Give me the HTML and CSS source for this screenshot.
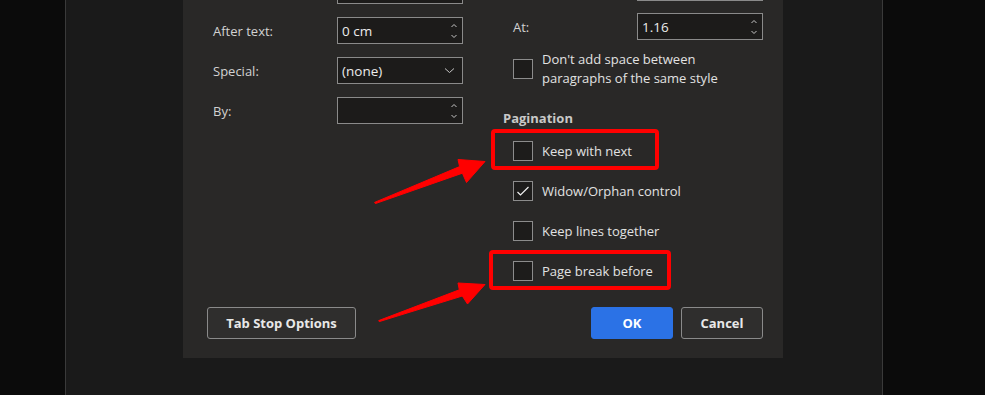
FILE: index.html
```html
<!DOCTYPE html>
<html lang="en">
<head>
    <meta charset="UTF-8">
    <meta name="viewport" content="width=device-width, initial-scale=1.0">
    <title>Paragraph - Line and Page Breaks</title>
    <link rel="stylesheet" href="styles.css">
</head>
<body>

    <div class="screen">
        <div class="side side-left"></div>

        <div class="panel">
            <div class="dialog">
                <div class="dialog-body">

                    <div class="col col-left">
                        <div class="field">
                            <span class="label"></span>
                            <div class="input spin">
                                <span class="value"></span>
                                <svg class="spin-arrows" width="8" height="18" viewBox="0 0 8 18"><path d="M1.5 5 L4 2.5 L6.5 5 M1.5 13 L4 15.5 L6.5 13"/></svg>
                            </div>
                        </div>
                        <div class="field">
                            <span class="label">After text:</span>
                            <div class="input spin">
                                <span class="value">0 cm</span>
                                <svg class="spin-arrows" width="8" height="18" viewBox="0 0 8 18"><path d="M1.5 5 L4 2.5 L6.5 5 M1.5 13 L4 15.5 L6.5 13"/></svg>
                            </div>
                        </div>
                        <div class="field">
                            <span class="label">Special:</span>
                            <div class="input select">
                                <span class="value">(none)</span>
                                <svg class="select-arrow" width="11" height="7" viewBox="0 0 11 7"><path d="M1 1.5 L5.5 5.5 L10 1.5"/></svg>
                            </div>
                        </div>
                        <div class="field">
                            <span class="label">By:</span>
                            <div class="input spin">
                                <span class="value"></span>
                                <svg class="spin-arrows" width="8" height="18" viewBox="0 0 8 18"><path d="M1.5 5 L4 2.5 L6.5 5 M1.5 13 L4 15.5 L6.5 13"/></svg>
                            </div>
                        </div>
                    </div>

                    <div class="col col-right">
                        <div class="field">
                            <span class="label"></span>
                            <div class="input spin">
                                <span class="value"></span>
                            </div>
                        </div>
                        <div class="field">
                            <span class="label">At:</span>
                            <div class="input spin">
                                <span class="value">1.16</span>
                                <svg class="spin-arrows" width="8" height="18" viewBox="0 0 8 18"><path d="M1.5 5 L4 2.5 L6.5 5 M1.5 13 L4 15.5 L6.5 13"/></svg>
                            </div>
                        </div>
                        <div class="check-row check-multi">
                            <span class="checkbox"></span>
                            <span class="check-text">Don't add space between<br>paragraphs of the same style</span>
                        </div>

                        <div class="section-title">Pagination</div>

                        <div class="check-row">
                            <span class="checkbox"></span>
                            <span class="check-text">Keep with next</span>
                        </div>
                        <div class="check-row">
                            <span class="checkbox checked">
                                <svg width="18" height="18" viewBox="0 0 18 18"><path d="M3.5 10 L6.5 13 L14.5 5"/></svg>
                            </span>
                            <span class="check-text">Widow/Orphan control</span>
                        </div>
                        <div class="check-row">
                            <span class="checkbox"></span>
                            <span class="check-text">Keep lines together</span>
                        </div>
                        <div class="check-row">
                            <span class="checkbox"></span>
                            <span class="check-text">Page break before</span>
                        </div>
                    </div>

                </div>

                <div class="dialog-footer">
                    <button class="btn btn-wide">Tab Stop Options</button>
                    <div class="footer-actions">
                        <button class="btn btn-primary">OK</button>
                        <button class="btn">Cancel</button>
                    </div>
                </div>
            </div>
        </div>

        <div class="side side-right"></div>

        <!-- red annotations drawn on top of the screenshot -->
        <svg class="notes" width="985" height="395" viewBox="0 0 985 395">
            <rect x="493" y="131" width="164" height="37" rx="2"/>
            <rect x="491" y="252" width="178" height="36" rx="2"/>
            <polygon points="374.6,202.4 459.6,166.6 458,159.5 485,161.5 466.5,182.5 462.4,173.2 375.4,203.6"/>
            <polygon points="378.7,320.6 459.3,289.8 458,283 485,284.5 467.5,304 462.3,296 379.3,321.6"/>
        </svg>
    </div>

</body>
</html>
```

FILE: styles.css
```css
body {
    margin: 0;
    padding: 0;
    background: #0c0c0c;
    font-family: 'Open Sans', 'Noto Sans', sans-serif;
    font-size: 13px;
    color: #d6d6d6;
    overflow: hidden;
}

.screen {
    position: relative;
    display: flex;
    width: 985px;
    height: 395px;
    overflow: hidden;
}

.side-left {
    width: 65px;
    background: #0b0b0b;
}

.side-right {
    flex: 1;
    background: #0b0b0b;
}

.panel {
    width: 816px;
    height: 395px;
    background: #1a1a1a;
    border-left: 1px solid #3a3a3a;
    border-right: 1px solid #3a3a3a;
}

.dialog {
    width: 600px;
    height: 388px;
    margin-top: -30px;
    margin-left: 117px;
    background: #292827;
    display: flex;
    flex-direction: column;
    box-sizing: border-box;
}

.dialog-body {
    display: flex;
    gap: 40px;
    height: 321px;
}

.col {
    display: flex;
    flex-direction: column;
}

.col-left {
    width: 250px;
    padding-left: 30px;
    padding-top: 7px;
    gap: 13px;
}

.col-right {
    width: 260px;
    padding-top: 4px;
}

.col-right .field {
    padding-left: 10px;
    margin-bottom: 12px;
}

.field {
    display: flex;
    align-items: center;
    height: 27px;
}

.label {
    width: 124px;
    flex-shrink: 0;
    color: #d2d2d2;
}

.input {
    width: 126px;
    height: 27px;
    flex-shrink: 0;
    box-sizing: border-box;
    background: #1c1b1a;
    border: 1px solid #8a8a8a;
    display: flex;
    align-items: center;
    justify-content: space-between;
    padding: 0 4px 0 4px;
    color: #ececec;
    font-size: 13.5px;
}

.spin-arrows path,
.select-arrow path {
    fill: none;
    stroke: #c4c4c4;
    stroke-width: 1;
}

.select {
    padding-right: 7px;
}

.check-row {
    display: flex;
    align-items: center;
    height: 40px;
    padding-left: 10px;
    gap: 9px;
}

.check-multi {
    height: 38px;
    margin-top: -2px;
    line-height: 19px;
}

.checkbox {
    width: 20px;
    height: 20px;
    box-sizing: border-box;
    border: 1px solid #8c8c8c;
    background: #1d1c1b;
    flex-shrink: 0;
}

.checked svg {
    display: block;
}

.checked path {
    fill: none;
    stroke: #f0f0f0;
    stroke-width: 1.2;
}

.check-text {
    color: #e2e2e2;
}

.section-title {
    font-weight: bold;
    color: #c8c8c8;
    height: 20px;
    line-height: 20px;
    margin-top: 20px;
    margin-bottom: 3px;
}

.dialog-footer {
    display: flex;
    justify-content: space-between;
    align-items: center;
    padding: 0 20px 0 24px;
    margin-top: 16px;
}

.footer-actions {
    display: flex;
    gap: 8px;
}

.btn {
    height: 32px;
    width: 82px;
    padding: 0;
    background: #2f2e2d;
    border: 1px solid #8a8a8a;
    border-radius: 3px;
    color: #e8e8e8;
    font-family: 'Open Sans', 'Noto Sans', sans-serif;
    font-size: 13px;
    font-weight: bold;
}

.btn-wide {
    width: 149px;
}

.btn-primary {
    background: #2b72e6;
    border-color: #2b72e6;
    color: #fff;
}

.notes {
    position: absolute;
    top: 0;
    left: 0;
    pointer-events: none;
}

.notes rect {
    fill: none;
    stroke: #ff0000;
    stroke-width: 4;
}

.notes polygon {
    fill: #ff0000;
    stroke: #ff0000;
    stroke-width: 1;
    stroke-linejoin: round;
}
```
